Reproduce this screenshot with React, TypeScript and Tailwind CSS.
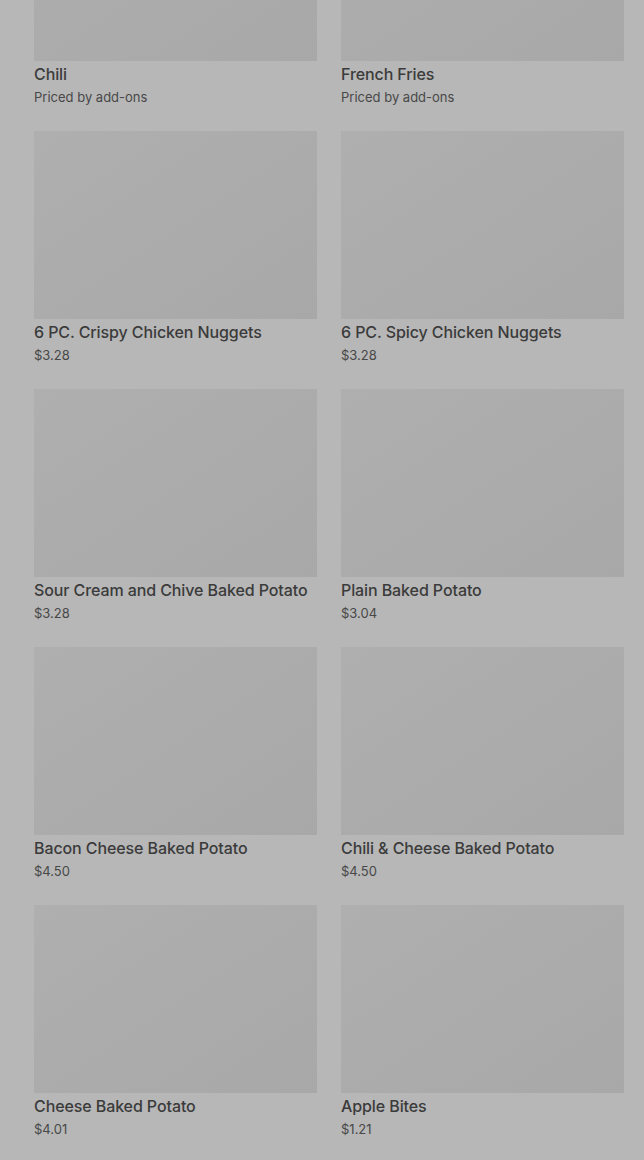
const items = [
  { name: "Chili", price: "Priced by add-ons" },
  { name: "French Fries", price: "Priced by add-ons" },
  { name: "6 PC. Crispy Chicken Nuggets", price: "$3.28" },
  { name: "6 PC. Spicy Chicken Nuggets", price: "$3.28" },
  { name: "Sour Cream and Chive Baked Potato", price: "$3.28" },
  { name: "Plain Baked Potato", price: "$3.04" },
  { name: "Bacon Cheese Baked Potato", price: "$4.50" },
  { name: "Chili & Cheese Baked Potato", price: "$4.50" },
  { name: "Cheese Baked Potato", price: "$4.01" },
  { name: "Apple Bites", price: "$1.21" },
];

function ItemCard({ name, price }: { name: string; price: string }) {
  return (
    <div className="flex flex-col pb-6">
      {/* image placeholder */}
      <div className="h-[188px] w-full bg-gradient-to-br from-[#afafaf] to-[#a8a8a8]" />
      <div className="mt-[3px] text-[16px] leading-5 font-medium tracking-[-0.1px] text-[#3b3b3b] whitespace-nowrap">
        {name}
      </div>
      <div className="mt-[3px] text-[13px] leading-5 text-[#484848]">{price}</div>
    </div>
  );
}

export default function App() {
  return (
    <div
      className="h-[1160px] overflow-hidden bg-[#b7b7b7]"
      style={{ fontFamily: "Inter, 'Noto Sans', sans-serif" }}
    >
      <div className="-mt-[127px] grid grid-cols-2 gap-x-6 pl-[34px] pr-[20px]">
        {items.map((it) => (
          <ItemCard key={it.name} name={it.name} price={it.price} />
        ))}
      </div>
    </div>
  );
}
